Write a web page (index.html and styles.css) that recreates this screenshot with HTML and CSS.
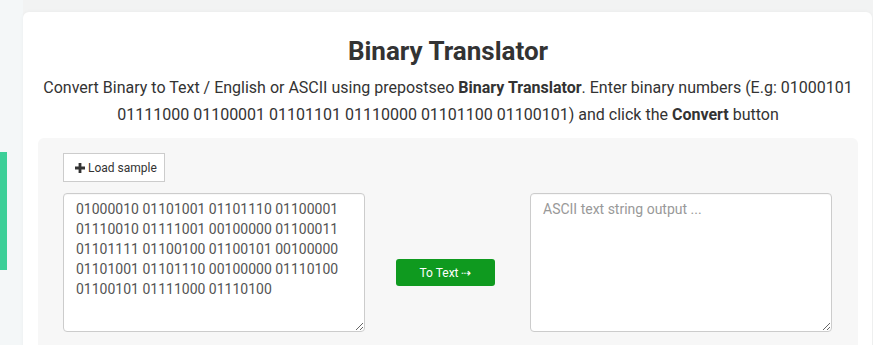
FILE: index.html
```html
<!DOCTYPE html>
<html lang="en">
<head>
<meta charset="utf-8">
<title>Binary Translator</title>
<link rel="stylesheet" href="styles.css">
</head>
<body>
<div class="page">
  <aside class="side"><div class="side-bar"></div></aside>
  <main class="main">
    <section class="card">
      <h1 class="title">Binary Translator</h1>
      <p class="intro">Convert Binary to Text / English or ASCII using prepostseo <b>Binary Translator</b>. Enter binary numbers (E.g: 01000101 01111000 01100001 01101101 01110000 01101100 01100101) and click the <b>Convert</b> button</p>
      <div class="panel">
        <button class="sample" type="button"><svg class="plus" viewBox="0 0 10 10" width="10" height="10"><path d="M3.6 0h2.8v3.6H10v2.8H6.4V10H3.6V6.4H0V3.6h3.6z" fill="#333"/></svg>Load sample</button>
        <div class="tool">
          <textarea class="box">01000010 01101001 01101110 01100001 01110010 01111001 00100000 01100011 01101111 01100100 01100101 00100000 01101001 01101110 00100000 01110100 01100101 01111000 01110100</textarea>
          <div class="mid"><button class="convert" type="button">To Text ⇢</button></div>
          <textarea class="box" placeholder="ASCII text string output ..."></textarea>
        </div>
      </div>
    </section>
  </main>
</div>
</body>
</html>
```
FILE: styles.css
```css
* { box-sizing: border-box; }
html, body { margin: 0; padding: 0; }
body {
  background: #f2f3f3;
  font-family: Roboto, "Liberation Sans", sans-serif;
  color: #333;
  height: 345px;
  overflow: hidden;
}
.page {
  display: flex;
  height: 345px;
}
.side {
  width: 23px;
  flex: none;
  background: #f4f7f8;
  padding-top: 152px;
}
.side-bar {
  width: 7px;
  height: 118px;
  background: #3ccf98;
}
.main {
  flex: 1;
  padding-top: 12px;
  padding-right: 1px;
}
.card {
  background: #fff;
  border-radius: 6px 6px 0 0;
  box-shadow: 0 0 4px rgba(0,0,0,0.04);
  padding: 21px 14px 0 15px;
  height: 340px;
}
.title {
  margin: 0;
  text-align: center;
  font-size: 26px;
  font-weight: 700;
  line-height: 36px;
  color: #333;
}
.intro {
  margin: 5px 0 0;
  padding: 0 4px;
  text-align: center;
  font-size: 16px;
  line-height: 27px;
  color: #333;
}
.intro b { font-weight: 700; }
.panel {
  margin-top: 10px;
  background: #f7f7f7;
  border-radius: 6px 6px 0 0;
  padding: 15px 26px 0 25px;
  height: 220px;
}
.sample {
  display: inline-flex;
  align-items: center;
  gap: 3px;
  height: 29px;
  width: 102px;
  padding: 0 0 0 11px;
  background: #fff;
  border: 1px solid #ccc;
  border-radius: 0;
  font-family: Roboto, "Liberation Sans", sans-serif;
  font-size: 12px;
  color: #333;
}
.plus { flex: none; }
.tool {
  display: grid;
  grid-template-columns: 302px 1fr 302px;
  margin-top: 11px;
}
.box {
  display: block;
  width: 302px;
  height: 139px;
  border: 1px solid #ccc;
  border-radius: 4px;
  padding: 5px 12px;
  font-family: Roboto, "Liberation Sans", sans-serif;
  font-size: 14px;
  line-height: 20px;
  color: #555;
  background: #fff;
  resize: both;
  box-shadow: inset 0 1px 1px rgba(0,0,0,0.03);
}
.box::placeholder { color: #999; }
.mid {
  display: flex;
  justify-content: center;
  padding-top: 66px;
  padding-right: 4px;
}
.convert {
  width: 99px;
  height: 27px;
  background: #0f9a1f;
  border: 0;
  border-radius: 3px;
  color: #fff;
  font-family: Roboto, "Liberation Sans", sans-serif;
  font-size: 12px;
}
```
